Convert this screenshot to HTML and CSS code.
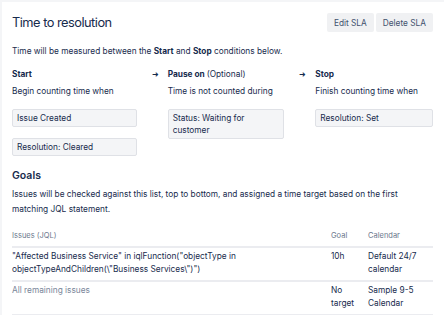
FILE: index.html
```html
<!DOCTYPE html>
<html lang="en">
<head>
  <meta charset="UTF-8" />
  <title>Time to resolution</title>
  <link rel="stylesheet" href="styles.css">
</head>
<body>
  <div class="card">
    <!-- Header -->
    <div class="head">
      <h1>Time to resolution</h1>
      <div class="actions">
        <button class="btn">Edit SLA</button>
        <button class="btn">Delete SLA</button>
      </div>
    </div>

    <p class="intro">Time will be measured between the <b>Start</b> and <b>Stop</b> conditions below.</p>

    <!-- Conditions -->
    <div class="conditions">
      <div class="cond cond-start">
        <h3>Start</h3>
        <p class="sub">Begin counting time when</p>
        <div class="chip">Issue Created</div>
        <div class="chip">Resolution: Cleared</div>
      </div>
      <div class="arrow">&#10140;</div>
      <div class="cond cond-pause">
        <h3>Pause on <span class="opt">(Optional)</span></h3>
        <p class="sub">Time is not counted during</p>
        <div class="chip">Status: Waiting for customer</div>
      </div>
      <div class="arrow">&#10140;</div>
      <div class="cond cond-stop">
        <h3>Stop</h3>
        <p class="sub">Finish counting time when</p>
        <div class="chip">Resolution: Set</div>
      </div>
    </div>

    <!-- Goals -->
    <h2>Goals</h2>
    <p class="goals-desc">Issues will be checked against this list, top to bottom, and assigned a time target based on the first matching JQL statement.</p>

    <table class="goals">
      <thead>
        <tr>
          <th class="col-jql">Issues (JQL)</th>
          <th class="col-goal">Goal</th>
          <th class="col-cal">Calendar</th>
        </tr>
      </thead>
      <tbody>
        <tr>
          <td>"Affected Business Service" in iqlFunction("objectType in objectTypeAndChildren(\"Business Services\")")</td>
          <td>10h</td>
          <td>Default 24/7 calendar</td>
        </tr>
        <tr>
          <td class="muted">All remaining issues</td>
          <td>No target</td>
          <td>Sample 9-5 Calendar</td>
        </tr>
      </tbody>
    </table>
  </div>
</body>
</html>
```

FILE: styles.css
```css
body { margin: 0; background: #f4f5f7; font-family: Inter, 'Noto Sans', sans-serif; color: #172b4d; font-size: 8.3px; }
.card { background: #fff; margin: 2px 0 0 2px; padding: 10px 11px 0 10px; height: 303px; overflow: hidden; }

.head {
  display: flex;
  justify-content: space-between;
  align-items: center;
  height: 21px;
}

.head h1 {
  margin: 0;
  font-size: 12.8px;
  font-weight: 400;
  letter-spacing: -0.5px;
}

.actions {
  display: flex;
  gap: 2px;
}

.btn {
  font-family: inherit;
  font-size: 8.3px;
  color: #42526e;
  background: #f0f1f3;
  border: 0;
  border-radius: 2px;
  height: 19px;
  padding: 0 7px;
}

.intro { margin: 12px 0 0; line-height: 12px; }

.conditions {
  display: flex;
  margin-top: 11px;
}

.cond h3 {
  margin: 0;
  font-size: 8.3px;
  font-weight: 700;
  line-height: 12px;
}

.cond h3 .opt { font-weight: 400; }

.cond .sub { margin: 5px 0 0; line-height: 12px; }

.cond-start { width: 125px; }
.cond-pause { width: 117px; }
.cond-stop { width: 118px; }

.arrow {
  width: 31px;
  padding-left: 15px;
  box-sizing: border-box;
  font-size: 8px;
  line-height: 12px;
  color: #172b4d;
}

.chip {
  margin-top: 11px;
  background: #f4f5f7;
  border: 1px solid #dfe1e6;
  border-radius: 2px;
  padding: 2px 4px;
  line-height: 12px;
  min-height: 12px;
}

.cond .sub + .chip { margin-top: 12px; }

h2 {
  margin: 13px 0 0;
  font-size: 10.5px;
  font-weight: 600;
  line-height: 14px;
}

.goals-desc { margin: 4px 0 0; line-height: 15px; }

.goals {
  width: 100%;
  border-collapse: collapse;
  margin-top: 14px;
}

.goals th {
  text-align: left;
  font-weight: 400;
  font-size: 7.5px;
  color: #6b778c;
  padding: 0 4px 6px 0;
  border-bottom: 2px solid #ebecf0;
}

.goals td {
  vertical-align: top;
  padding: 2px 4px 5px 0;
  line-height: 12.5px;
  border-bottom: 2px solid #ebecf0;
}

.goals th:last-child,
.goals td:last-child { padding-right: 0; }

.col-goal { width: 33px; }
.col-cal { width: 65px; }
.goals .muted { color: #7a869a; }
```
